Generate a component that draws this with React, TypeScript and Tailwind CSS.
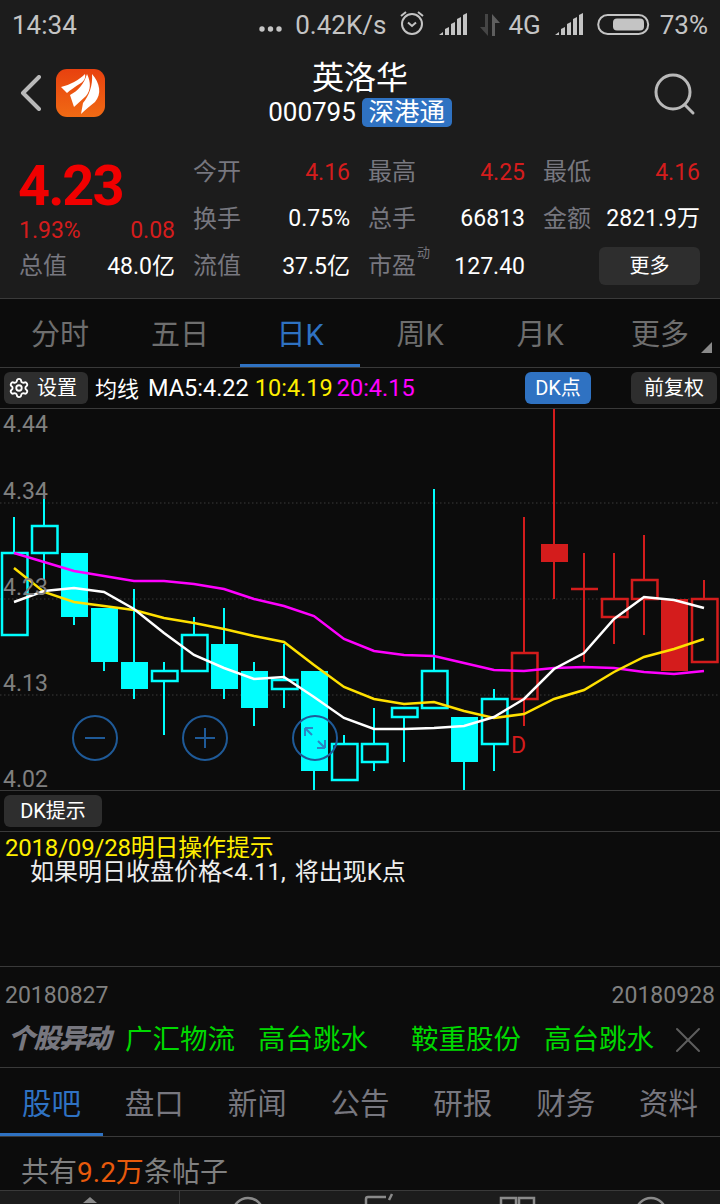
import { Settings, X } from "lucide-react"

const font = "[font-family:Roboto,'Noto_Sans_CJK_SC',sans-serif]"

type Candle = { x: number; top: number; bottom: number; high?: number; low?: number; solid?: boolean; red?: boolean }

const candles: Candle[] = [
  { x: 14, top: 553, bottom: 635, high: 517 },
  { x: 44, top: 526, bottom: 553, high: 490, low: 580 },
  { x: 74, top: 553, bottom: 617, low: 625, solid: true },
  { x: 104, top: 608, bottom: 662, low: 671, solid: true },
  { x: 134, top: 662, bottom: 689, high: 589, low: 699, solid: true },
  { x: 164, top: 671, bottom: 681, high: 662, low: 735 },
  { x: 194, top: 635, bottom: 671, high: 617 },
  { x: 224, top: 644, bottom: 689, high: 608, low: 699, solid: true },
  { x: 254, top: 671, bottom: 708, high: 662, low: 726, solid: true },
  { x: 284, top: 680, bottom: 689, high: 644, low: 708 },
  { x: 314, top: 671, bottom: 771, low: 790, solid: true },
  { x: 344, top: 744, bottom: 780, high: 735 },
  { x: 374, top: 744, bottom: 762, high: 708, low: 771 },
  { x: 404, top: 708, bottom: 717, low: 762 },
  { x: 434, top: 671, bottom: 708, high: 489 },
  { x: 464, top: 717, bottom: 762, low: 790, solid: true },
  { x: 494, top: 699, bottom: 744, high: 689, low: 771 },
  { x: 524, top: 653, bottom: 699, high: 517, low: 726, red: true },
  { x: 554, top: 544, bottom: 562, high: 409, low: 599, solid: true, red: true },
  { x: 584, top: 589, bottom: 589, high: 553, low: 662, red: true },
  { x: 614, top: 599, bottom: 617, high: 553, low: 644, red: true },
  { x: 644, top: 580, bottom: 599, high: 535, low: 635, red: true },
  { x: 674, top: 599, bottom: 671, solid: true, red: true },
  { x: 704, top: 599, bottom: 662, high: 580, red: true },
]

const xs = candles.map((c) => c.x)
const line = (ys: number[]) => ys.map((y, i) => `${xs[i]},${y - 409}`).join(" ")
const ma5 = [602, 591, 588, 592, 609, 633, 655, 668, 679, 677, 697, 718, 729, 729, 728, 726, 717, 699, 669, 653, 619, 597, 600, 608]
const ma10 = [568, 592, 602, 606, 610, 618, 623, 629, 636, 642, 665, 687, 699, 704, 702, 711, 718, 714, 699, 690, 672, 657, 649, 639]
const ma20 = [553, 562, 571, 576, 581, 581, 584, 589, 599, 606, 616, 639, 651, 655, 656, 663, 670, 671, 668, 667, 668, 672, 674, 671]

const CYAN = "#00ffff"
const RED = "#d41c1c"

function KChart() {
  return (
    <svg width="720" height="381" viewBox="0 0 720 381" className="block">
      {[94, 190, 286].map((y) => (
        <line key={y} x1="0" x2="720" y1={y} y2={y} stroke="#3a3a3a" strokeWidth="1" strokeDasharray="1.5 2.5" />
      ))}
      {candles.map((c) => {
        const color = c.red ? RED : CYAN
        const t = c.top - 409
        const b = c.bottom - 409
        return (
          <g key={c.x}>
            {c.high !== undefined && <line x1={c.x} x2={c.x} y1={c.high - 409} y2={t} stroke={color} strokeWidth="2" />}
            {c.low !== undefined && <line x1={c.x} x2={c.x} y1={b} y2={c.low - 409} stroke={color} strokeWidth="2" />}
            {c.solid ? (
              <rect x={c.x - 13} y={t} width="27" height={b - t} fill={color} />
            ) : t === b ? (
              <line x1={c.x - 13} x2={c.x + 14} y1={t} y2={t} stroke={color} strokeWidth="2.5" />
            ) : (
              <rect x={c.x - 12} y={t} width="25.5" height={b - t} fill="none" stroke={color} strokeWidth="2.5" />
            )}
          </g>
        )
      })}
      <polyline points={line(ma20)} fill="none" stroke="#ff00ff" strokeWidth="2.5" />
      <polyline points={line(ma10)} fill="none" stroke="#ffe000" strokeWidth="2.5" />
      <polyline points={line(ma5)} fill="none" stroke="#ffffff" strokeWidth="2.5" />
      {[95, 205, 315].map((x) => (
        <circle key={x} cx={x} cy="329" r="22" fill="none" stroke="#1f5a98" strokeWidth="2" />
      ))}
      <path d="M85 329h20M195 329h20M205 319v20" stroke="#1f5a98" strokeWidth="2" fill="none" />
      <path d="M305 319l7 7M305 319v8M305 319h8M325 339l-7-7M325 339v-8M325 339h-8" stroke="#2a86c4" strokeWidth="2" fill="none" />
    </svg>
  )
}

function Signal({ className }: { className: string }) {
  return (
    <svg width="30" height="24" viewBox="0 0 30 24" className={className} fill="#c4c4c4">
      <path d="M0 22l4-3v3zM6 22v-6l4-2v8zM12 22V11l4-2v13zM18 22V6l4-2v18zM24 22V2l4-2v22z" />
    </svg>
  )
}

function StatusBar() {
  return (
    <div className="h-[50px] flex items-center pl-[12px] pr-[12px] text-[#c4c4c4] text-[26px]">
      <span className="leading-none">14:34</span>
      <div className="ml-auto flex items-center">
        <svg width="23" height="6" viewBox="0 0 23 6" className="mt-[8px] mr-[13px]">
          <circle cx="3" cy="3" r="2.7" fill="#c4c4c4" />
          <circle cx="11.5" cy="3" r="2.7" fill="#c4c4c4" />
          <circle cx="20" cy="3" r="2.7" fill="#c4c4c4" />
        </svg>
        <span className="leading-none">0.42K/s</span>
        <svg width="26" height="28" viewBox="0 0 26 28" className="ml-[13px] mb-[4px]" fill="none" stroke="#c4c4c4">
          <circle cx="13" cy="15" r="10" strokeWidth="2" />
          <path d="M9 13.5l4 3.5 4-3.5M2 7l5-4M24 7l-5-4" strokeWidth="2" />
        </svg>
        <Signal className="ml-[14px]" />
        <svg width="21" height="24" viewBox="0 0 21 24" className="ml-[11px]">
          <path d="M5 1h3v22L0 14h5z" fill="#454545" />
          <path d="M12 1l8 9h-5v13h-3z" fill="#5e5e5e" />
        </svg>
        <span className="ml-[7px] leading-none">4G</span>
        <Signal className="ml-[14px]" />
        <svg width="53" height="24" viewBox="0 0 53 24" className="ml-[12px]">
          <rect x="1.2" y="2" width="50" height="19" rx="9.5" fill="none" stroke="#c4c4c4" strokeWidth="2" />
          <rect x="16" y="5.5" width="31" height="12" rx="4" fill="#c4c4c4" />
        </svg>
        <span className="ml-[10px] leading-none">73%</span>
      </div>
    </div>
  )
}

function Logo() {
  return (
    <svg width="49" height="48" viewBox="0 0 49 48" className="ml-[15px]">
      <defs>
        <linearGradient id="logoFill" x1="0" y1="0" x2="0" y2="1">
          <stop offset="0" stopColor="#e8410f" />
          <stop offset="1" stopColor="#f06a14" />
        </linearGradient>
      </defs>
      <rect width="49" height="48" rx="11" fill="url(#logoFill)" />
      <path d="M5 18C14 16 23 11 29 5C30 9 28 12 25 14C19 18 14 21 11 24Z" fill="#fff" />
      <path d="M14 26C22 22 28 15 31 5C35 13 35 21 30 27C26 31 22 34 18 38Z" fill="#fff" />
      <path d="M27 34C33 27 37 16 36 5C44 14 46 25 39 33C34 37 29 41 25 45Z" fill="#fff" />
    </svg>
  )
}

function Stat({ label, value, red, extra }: { label: string; value: string; red?: boolean; extra?: boolean }) {
  return (
    <div className="flex items-center justify-between h-[46.5px]">
      <span className="relative text-[24px] text-[#77777f] leading-none">
        {label}
        {extra && <span className="absolute -right-[14px] -top-[8px] text-[13px] text-[#77777f]">动</span>}
      </span>
      <span className={`text-[23px] leading-none ${red ? "text-[#d41c1c]" : "text-white"}`}>{value}</span>
    </div>
  )
}

function Quote() {
  return (
    <div className="h-[150px] border-b border-[#3a3a3a] px-[19px] grid grid-cols-[156px_157px_157px_157px] gap-x-[18px] gap-y-[1px] content-start">
      <div className="h-[93px] flex flex-col">
        <span className="text-[56px] font-bold text-[#f00000] leading-none mt-[9px] -ml-[1px] tracking-[-2px]">4.23</span>
        <div className="flex justify-between text-[23px] text-[#d41c1c] leading-none mt-[5px]">
          <span>1.93%</span>
          <span>0.08</span>
        </div>
      </div>
      <div>
        <Stat label="今开" value="4.16" red />
        <Stat label="换手" value="0.75%" />
      </div>
      <div>
        <Stat label="最高" value="4.25" red />
        <Stat label="总手" value="66813" />
      </div>
      <div>
        <Stat label="最低" value="4.16" red />
        <Stat label="金额" value="2821.9万" />
      </div>
      <Stat label="总值" value="48.0亿" />
      <Stat label="流值" value="37.5亿" />
      <Stat label="市盈" value="127.40" extra />
      <div className="h-[46.5px] flex items-center justify-end">
        <button className="w-[101px] h-[38px] rounded-[6px] bg-[#2e2e2e] text-white text-[20px]">更多</button>
      </div>
    </div>
  )
}

function PeriodTabs() {
  const tabs = ["分时", "五日", "日K", "周K", "月K", "更多"]
  return (
    <div className="h-[69px] grid grid-cols-6 border-b border-[#3a3a3a]">
      {tabs.map((t, i) => (
        <div
          key={t}
          className={`relative flex items-center justify-center pt-[9px] text-[29px] ${
            i === 2 ? "text-[#2f72c2] border-b-[3px] border-[#2f72c2]" : "text-[#6e6e6e] border-b-[3px] border-transparent"
          }`}
        >
          {t}
          {i === 5 && (
            <span className="absolute right-[8px] bottom-[11px] w-0 h-0 border-l-[11px] border-l-transparent border-b-[11px] border-b-[#8a8a8a]" />
          )}
        </div>
      ))}
    </div>
  )
}

function Toolbar() {
  return (
    <div className="h-[41px] flex items-center pl-[4px] pr-[3px] border-b border-[#3a3a3a]">
      <button className="w-[84px] h-[32px] rounded-[6px] bg-[#2e2e2e] flex items-center pl-[4px] text-white text-[20px]">
        <Settings size={22} strokeWidth={2} className="mr-[7px]" />
        设置
      </button>
      <span className="ml-[7px] mt-[2px] text-[22px] text-white">均线</span>
      <span className="ml-[9px] mt-[2px] text-[23.5px] text-white">MA5:4.22</span>
      <span className="ml-[6px] mt-[2px] text-[23.5px] text-[#ffee00]">10:4.19</span>
      <span className="ml-[4px] mt-[2px] text-[23.5px] text-[#ff00ff]">20:4.15</span>
      <button className="ml-auto w-[66px] h-[32px] rounded-[6px] bg-[#2f72c2] text-white text-[20px]">DK点</button>
      <button className="ml-[40px] w-[86px] h-[32px] rounded-[6px] bg-[#2e2e2e] text-white text-[20px]">前复权</button>
    </div>
  )
}

function TickerRow() {
  return (
    <div className="h-[50px] flex items-center pl-[8px] pb-[6px] border-b border-[#3a3a3a] text-[27.5px] text-[#00d800]">
      <span className="w-[117px] text-[27px] font-black italic text-[#77777f] tracking-[-1.5px] leading-none whitespace-nowrap">个股异动</span>
      <span className="leading-none">广汇物流</span>
      <span className="ml-[23px] leading-none">高台跳水</span>
      <span className="ml-[43px] leading-none">鞍重股份</span>
      <span className="ml-[23px] leading-none">高台跳水</span>
      <X size={44} strokeWidth={1.1} className="ml-[12px] text-[#5e5e5e]" />
    </div>
  )
}

function InfoTabs() {
  const tabs = ["股吧", "盘口", "新闻", "公告", "研报", "财务", "资料"]
  return (
    <div className="h-[69px] grid grid-cols-7 border-b border-[#3a3a3a]">
      {tabs.map((t, i) => (
        <div
          key={t}
          className={`flex items-center justify-center pt-[7px] text-[29.5px] border-b-[3px] ${
            i === 0 ? "text-[#2f72c2] border-[#2f72c2]" : "text-[#77777f] border-transparent"
          }`}
        >
          {t}
        </div>
      ))}
    </div>
  )
}

function BottomNav() {
  return (
    <div className="h-[14px] bg-[#1c1c1c] border-t border-[#3a3a3a] flex overflow-hidden">
      <div className="w-[180px] border-r border-[#3a3a3a] flex justify-center pt-[6px]">
        <span className="w-0 h-0 border-x-[7px] border-x-transparent border-b-[6px] border-b-[#8a8a8a]" />
      </div>
      <svg width="539" height="13" viewBox="0 0 539 13" fill="none" stroke="#8a8a8a" strokeWidth="2.5">
        <circle cx="68" cy="22" r="15" />
        <path d="M186 13V8q0-2 2-2h18M212 3l-3 6" />
        <path d="M321 13V7h15v6M339 13V7h15v6" />
        <circle cx="471" cy="22" r="15" />
      </svg>
    </div>
  )
}

export default function App() {
  return (
    <div className={`w-[720px] h-[1204px] overflow-hidden bg-[#0c0c0c] ${font}`}>
      <div className="bg-[#1c1c1c]">
        <StatusBar />
        <div className="h-[99px] relative flex items-start pt-[19px]">
          <div className="flex items-center pl-[20px] h-[48px]">
            <svg width="21" height="36" viewBox="0 0 21 36" fill="none" stroke="#b9b9b9" strokeWidth="4" strokeLinecap="round" strokeLinejoin="round">
              <path d="M19 2L3 18l16 16" />
            </svg>
            <Logo />
          </div>
          <div className="absolute inset-x-0 top-[9px] flex flex-col items-center text-white">
            <span className="text-[32px] leading-[38px]">英洛华</span>
            <div className="flex items-center">
              <span className="text-[26px] leading-[30px]">000795</span>
              <span className="ml-[6px] h-[29px] w-[90px] rounded-[5px] bg-[#2f72c2] text-[25.5px] leading-[29px] text-center">深港通</span>
            </div>
          </div>
          <svg width="44" height="44" viewBox="0 0 44 44" className="ml-auto mr-[23px] mt-[3px]" fill="none" stroke="#b9b9b9" strokeWidth="3">
            <circle cx="20" cy="20" r="17" />
            <path d="M32 33l8 8" strokeLinecap="round" />
          </svg>
        </div>
        <Quote />
      </div>
      <PeriodTabs />
      <Toolbar />
      <div className="h-[381px] relative">
        <KChart />
        {[
          ["4.44", "top-[5px]"],
          ["4.34", "top-[72px]"],
          ["4.23", "top-[168px]"],
          ["4.13", "top-[264px]"],
          ["4.02", "top-[360px]"],
        ].map(([v, pos]) => (
          <span key={v} className={`absolute left-[3px] ${pos} text-[23px] leading-[22px] text-[#808080]`}>
            {v}
          </span>
        ))}
        <span className="absolute left-[511px] top-[324px] text-[23px] leading-[26px] text-[#d41c1c]">D</span>
      </div>
      <div className="h-[42px] flex items-center pl-[4px] border-y border-[#3a3a3a]">
        <button className="w-[98px] h-[32px] rounded-[6px] bg-[#2e2e2e] text-white text-[20px]">DK提示</button>
      </div>
      <div className="h-[135px] border-b border-[#3a3a3a] pt-[4px] text-[24px] leading-[24px]">
        <div className="pl-[5px] text-[#ffee00] tracking-[-0.2px]">2018/09/28明日操作提示</div>
        <div className="pl-[30px] text-[#eeeeee]">
          如果明日收盘价格&lt;4.11,<span className="ml-[9px]">将出现K点</span>
        </div>
      </div>
      <div className="h-[51px] flex items-center justify-between px-[5px] pt-[8px] text-[23px] text-[#808080]">
        <span>20180827</span>
        <span>20180928</span>
      </div>
      <TickerRow />
      <InfoTabs />
      <div className="h-[53px] pl-[21px] pt-[18px] text-[28px] leading-[36px] text-[#808080]">
        共有<span className="text-[#e85a0c]">9.2万</span>条帖子
      </div>
      <BottomNav />
    </div>
  )
}
